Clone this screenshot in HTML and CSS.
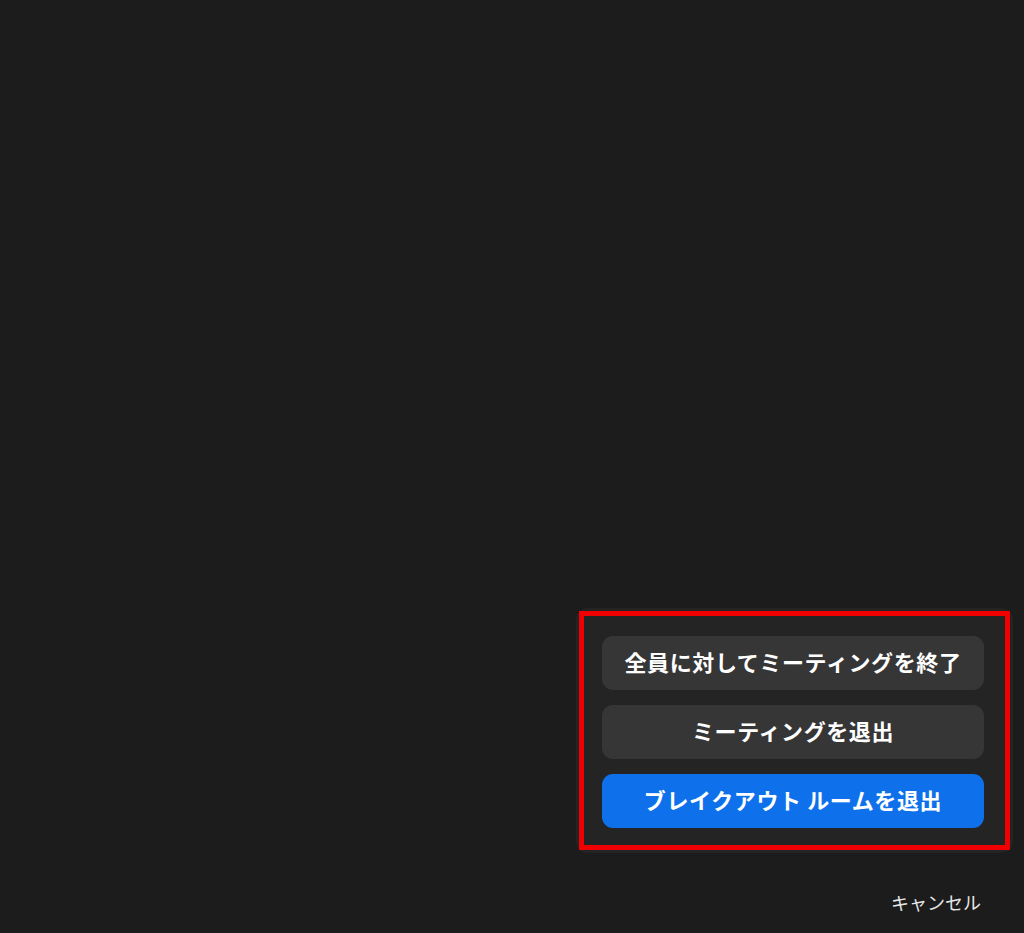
FILE: index.html
```html
<!DOCTYPE html>
<html lang="ja">
<head>
<meta charset="utf-8">
<title>終了</title>
<link rel="stylesheet" href="styles.css">
</head>
<body>
<main class="screen">
  <section class="panel">
    <div class="highlight">
      <button class="btn btn-gray">全員に対してミーティングを終了</button>
      <button class="btn btn-gray">ミーティングを退出</button>
      <button class="btn btn-blue">ブレイクアウト ルームを退出</button>
    </div>
  </section>
  <footer class="footer">
    <span class="cancel">キャンセル</span>
  </footer>
</main>
</body>
</html>
```

FILE: styles.css
```css
html, body {
  margin: 0;
  padding: 0;
  background: #1c1c1c;
}
body {
  font-family: "Noto Sans CJK JP", "Noto Sans", sans-serif;
  color: #ffffff;
}
.screen {
  width: 1024px;
  height: 933px;
  display: flex;
  flex-direction: column;
  justify-content: flex-end;
  align-items: flex-end;
}
.panel {
  background: #242424;
  border-radius: 12px;
  padding: 3px;
  margin-right: 11px;
}
.highlight {
  width: 431px;
  border: 5px solid #f00000;
  padding: 20px 21px 17px 18px;
  display: flex;
  flex-direction: column;
  gap: 15px;
  box-sizing: border-box;
}
.btn {
  height: 54px;
  border: none;
  border-radius: 11px;
  font-family: "Noto Sans CJK JP", "Noto Sans", sans-serif;
  font-size: 22px;
  font-weight: 700;
  color: #ffffff;
  display: flex;
  align-items: center;
  justify-content: center;
  padding: 0 0 4px;
  letter-spacing: 0.6px;
}
.btn-gray {
  background: #363636;
}
.btn-blue {
  background: #0e71eb;
}
.footer {
  height: 80px;
  box-sizing: border-box;
  padding: 38px 43px 0 0;
  display: flex;
  justify-content: flex-end;
}
.cancel {
  font-size: 18px;
  line-height: 22px;
  color: #e6e6e6;
}
```
